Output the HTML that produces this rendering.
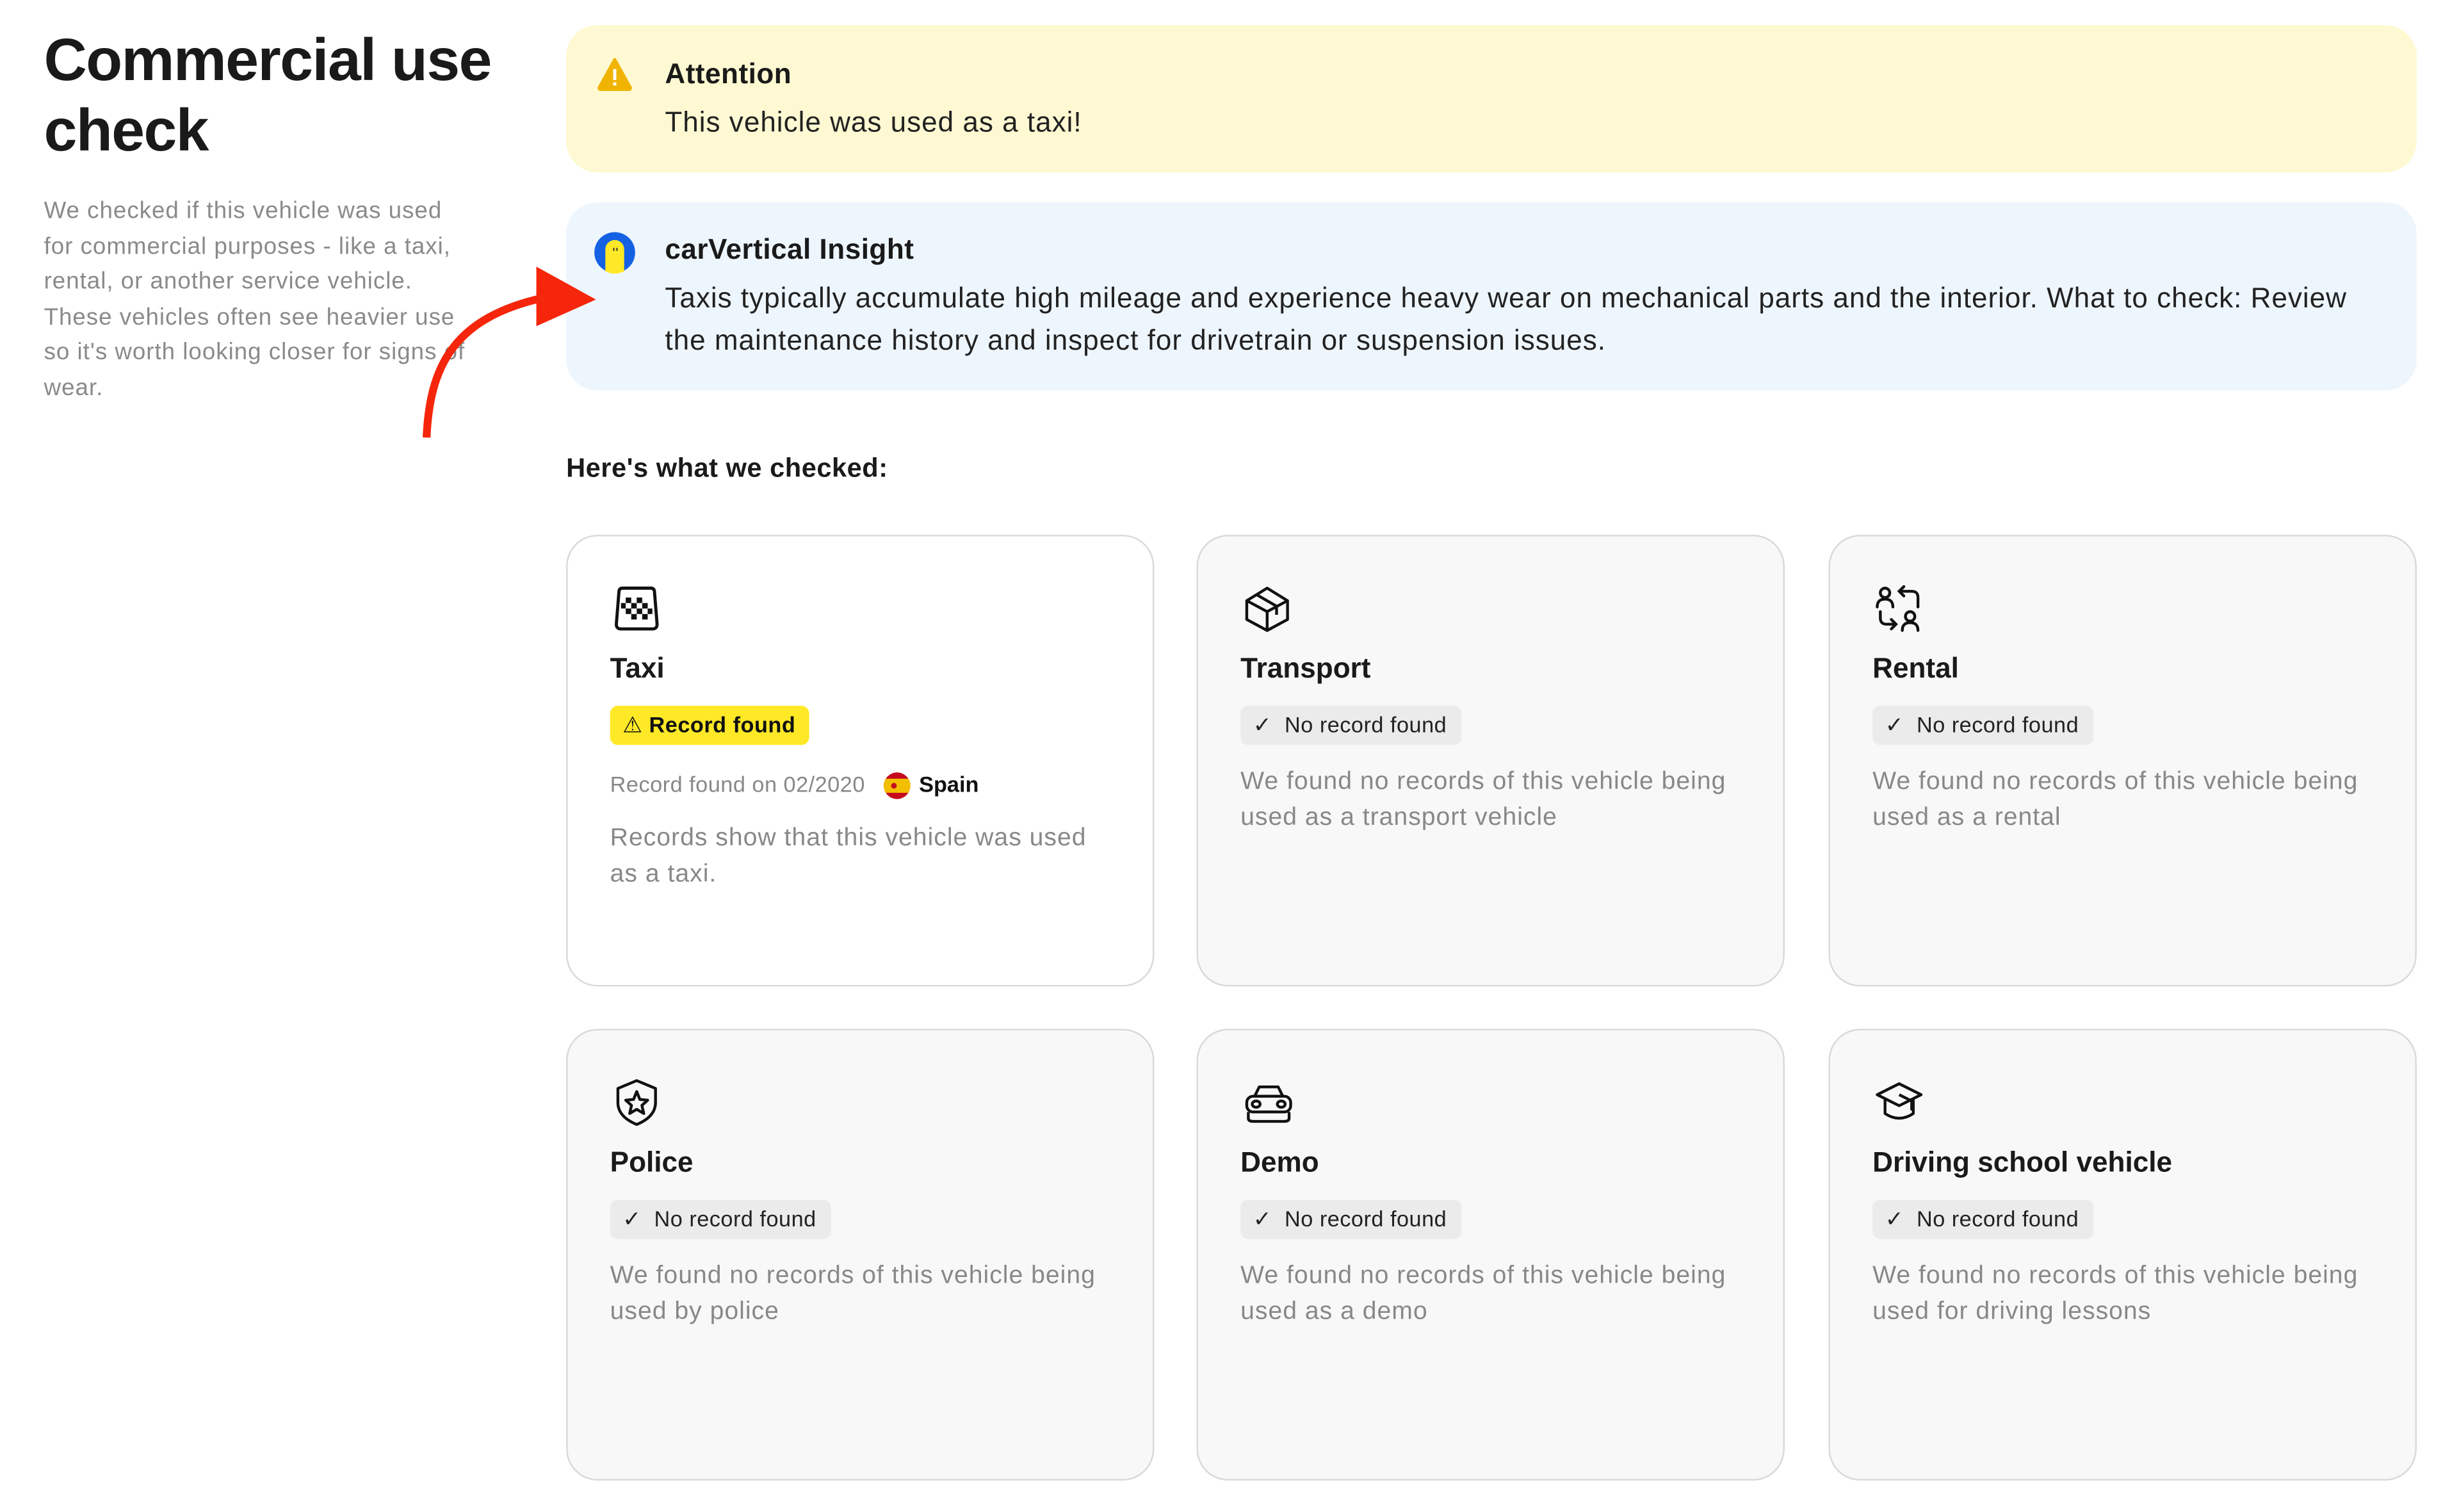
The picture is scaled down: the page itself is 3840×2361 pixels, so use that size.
<!DOCTYPE html>
<html><head><meta charset="utf-8"><style>
html,body{margin:0;padding:0;background:#fff;width:3840px;height:2361px;overflow:hidden}
#w{position:absolute;left:0;top:0;width:1568px;height:964px;transform:scale(2.449);transform-origin:0 0;font-family:"Liberation Sans",sans-serif;color:#1a1a1a}
.a{position:absolute}
h1{position:absolute;left:28px;top:17px;margin:0;font-size:38px;line-height:45px;font-weight:700;letter-spacing:-0.6px}
.desc{left:28px;top:124px;white-space:nowrap;font-size:15px;line-height:22.5px;color:#8a8a8a;letter-spacing:0.4px}
.box{position:absolute;left:361px;width:1180px;border-radius:20px}
.bt{position:absolute;left:63px;font-size:18px;font-weight:700;letter-spacing:0.2px}
.bx{position:absolute;left:63px;font-size:18px;line-height:27px;color:#222;letter-spacing:0.4px}
.card{position:absolute;width:373px;height:286px;border:1px solid #d9d9d9;border-radius:20px;background:#f8f8f8}
.card.w{background:#fff}
.card svg.ic{position:absolute;left:28px;top:30px}
.ct{position:absolute;left:27px;top:74px;font-size:18px;font-weight:700}
.badge{position:absolute;left:27px;top:108px;height:25px;line-height:25px;padding:0 9px 0 8px;border-radius:5px;background:#ebebeb;font-size:14px;color:#222;letter-spacing:0.2px}
.badge.y{background:#ffe927;font-weight:700;color:#111}
.cd{position:absolute;left:27px;top:145px;width:330px;font-size:16px;line-height:23px;color:#888;letter-spacing:0.4px}
</style></head><body><div id="w">
<h1>Commercial use<br>check</h1>
<div class="a desc">We checked if this vehicle was used<br>for commercial purposes - like a taxi,<br>rental, or another service vehicle.<br>These vehicles often see heavier use<br>so it's worth looking closer for signs of<br>wear.</div>

<div class="box" style="top:16px;height:94px;background:#fef9d2">
<svg class="a" style="left:20px;top:21px" width="22" height="21" viewBox="0 0 22 21"><path d="M11 1 L21 19 Q21 20 20 20 L2 20 Q1 20 1 19 Z" fill="#f0b400" stroke="#f0b400" stroke-width="2" stroke-linejoin="round"/><rect x="10" y="7" width="2" height="7" fill="#fff"/><rect x="10" y="15.5" width="2" height="2" fill="#fff"/></svg>
<div class="bt" style="top:21px">Attention</div>
<div class="bx" style="top:49px">This vehicle was used as a taxi!</div>
</div>

<div class="box" style="top:129px;height:120px;background:#eef6fd">
<svg class="a" style="left:17px;top:18px" width="28" height="28" viewBox="0 0 28 28"><circle cx="14" cy="14" r="13" fill="#1462e3"/><path d="M8 12 a6 6 0 0 1 12 0 v14 a13 13 0 0 1 -12 0z" fill="#ffe927"/><rect x="13" y="11" width="0.8" height="2" fill="#333"/><rect x="15" y="11" width="0.8" height="2" fill="#333"/></svg>
<div class="bt" style="top:20px">carVertical Insight</div>
<div class="bx" style="top:48px;width:1100px">Taxis typically accumulate high mileage and experience heavy wear on mechanical parts and the interior. What to check: Review the maintenance history and inspect for drivetrain or suspension issues.</div>
</div>

<svg class="a" style="left:260px;top:165px" width="130" height="120" viewBox="0 0 130 120"><path d="M12 114 C14 70 28 38 86 25" fill="none" stroke="#f5260b" stroke-width="5"/><path d="M82 5 L120 26 L82 43 Z" fill="#f5260b"/></svg>

<div class="a" style="left:361px;top:289px;font-size:17px;font-weight:700;letter-spacing:0.2px">Here's what we checked:</div>

<div class="card w" style="left:361px;top:341px">
<svg class="ic" width="32" height="32" viewBox="0 0 32 32"><path d="M7 3 H25 Q27 3 27.3 5 L29 26 Q29 29 26 29 H6 Q3 29 3 26 L4.7 5 Q5 3 7 3Z" fill="none" stroke="#111" stroke-width="2"/><g fill="#111"><rect x="9" y="9" width="3.5" height="3.5"/><rect x="16" y="9" width="3.5" height="3.5"/><rect x="12.5" y="12.5" width="3.5" height="3.5"/><rect x="19.5" y="12.5" width="3.5" height="3.5"/><rect x="9" y="16" width="3.5" height="3.5"/><rect x="16" y="16" width="3.5" height="3.5"/><rect x="12.5" y="19.5" width="3.5" height="3.5"/><rect x="19.5" y="19.5" width="3.5" height="3.5"/><rect x="6" y="12.5" width="3" height="3.5"/><rect x="23" y="16" width="3" height="3.5"/></g></svg>
<div class="ct">Taxi</div>
<div class="badge y"><span style="font-weight:400">⚠</span> Record found</div>
<div class="a" style="left:27px;top:150px;font-size:14px;color:#888;letter-spacing:0.2px">Record found on 02/2020</div>
<svg class="a" style="left:201px;top:150px" width="18" height="18" viewBox="0 0 18 18"><clipPath id="c"><circle cx="9" cy="9" r="8.5"/></clipPath><g clip-path="url(#c)"><rect width="18" height="18" fill="#c60b1e"/><rect y="4.5" width="18" height="9" fill="#f1bf00"/><circle cx="7" cy="9" r="1.8" fill="#c60b1e"/></g></svg>
<div class="a" style="left:224px;top:150px;font-size:14px;font-weight:700;color:#111">Spain</div>
<div class="cd" style="top:181px;width:315px">Records show that this vehicle was used as a taxi.</div>
</div>

<div class="card" style="left:763px;top:341px">
<svg class="ic" width="32" height="32" viewBox="0 0 32 32" fill="none" stroke="#111" stroke-width="1.8" stroke-linejoin="round"><path d="M16 3 L29 11 V23 L16 30 L3 23 V11 Z"/><path d="M3 11 L16 18 L29 11 M16 18 V30 M9 7 L22 14.5 V20"/></svg>
<div class="ct">Transport</div>
<div class="badge">✓&nbsp; No record found</div>
<div class="cd">We found no records of this vehicle being used as a transport vehicle</div>
</div>

<div class="card" style="left:1166px;top:341px">
<svg class="ic" width="32" height="32" viewBox="0 0 32 32" fill="none" stroke="#111" stroke-width="1.8" stroke-linecap="round"><circle cx="7" cy="6" r="3"/><path d="M2 15 Q2 10 7 10 Q12 10 12 15"/><circle cx="23" cy="21" r="3"/><path d="M18 30 Q18 25 23 25 Q28 25 28 30"/><path d="M17 5 H24 Q28 5 28 9 V15 M19 2 L16 5 L19 8"/><path d="M4 18 V22 Q4 26 8 26 H14 M11 23 L14 26 L11 29"/></svg>
<div class="ct">Rental</div>
<div class="badge">✓&nbsp; No record found</div>
<div class="cd">We found no records of this vehicle being used as a rental</div>
</div>

<div class="card" style="left:361px;top:656px">
<svg class="ic" width="32" height="32" viewBox="0 0 32 32" fill="none" stroke="#111" stroke-width="1.8" stroke-linejoin="round"><path d="M16 2 L28 7 V16 Q28 25 16 30 Q4 25 4 16 V7 Z"/><path d="M16 9 L18 14 L23 14.5 L19.3 17.8 L20.5 23 L16 20.3 L11.5 23 L12.7 17.8 L9 14.5 L14 14 Z"/></svg>
<div class="ct">Police</div>
<div class="badge">✓&nbsp; No record found</div>
<div class="cd">We found no records of this vehicle being used by police</div>
</div>

<div class="card" style="left:763px;top:656px">
<svg class="ic" width="34" height="32" viewBox="0 0 34 32" fill="none" stroke="#111" stroke-width="1.8" stroke-linejoin="round"><path d="M11 6 H23 L26 12 H8 Z"/><rect x="3" y="12" width="28" height="10" rx="4"/><ellipse cx="9" cy="17" rx="2.5" ry="2"/><ellipse cx="25" cy="17" rx="2.5" ry="2"/><path d="M4 22 V26 Q4 28 7 28 H27 Q30 28 30 26 V22 M12 22 H22"/></svg>
<div class="ct">Demo</div>
<div class="badge">✓&nbsp; No record found</div>
<div class="cd">We found no records of this vehicle being used as a demo</div>
</div>

<div class="card" style="left:1166px;top:656px">
<svg class="ic" width="32" height="32" viewBox="0 0 32 32" fill="none" stroke="#111" stroke-width="1.8" stroke-linejoin="round"><path d="M16 4 L30 11 L16 18 L2 11 Z"/><path d="M7 14 V23 Q16 29 25 23 V14"/><path d="M16 11 L24 15 V21"/></svg>
<div class="ct">Driving school vehicle</div>
<div class="badge">✓&nbsp; No record found</div>
<div class="cd">We found no records of this vehicle being used for driving lessons</div>
</div>
</div></body></html>
